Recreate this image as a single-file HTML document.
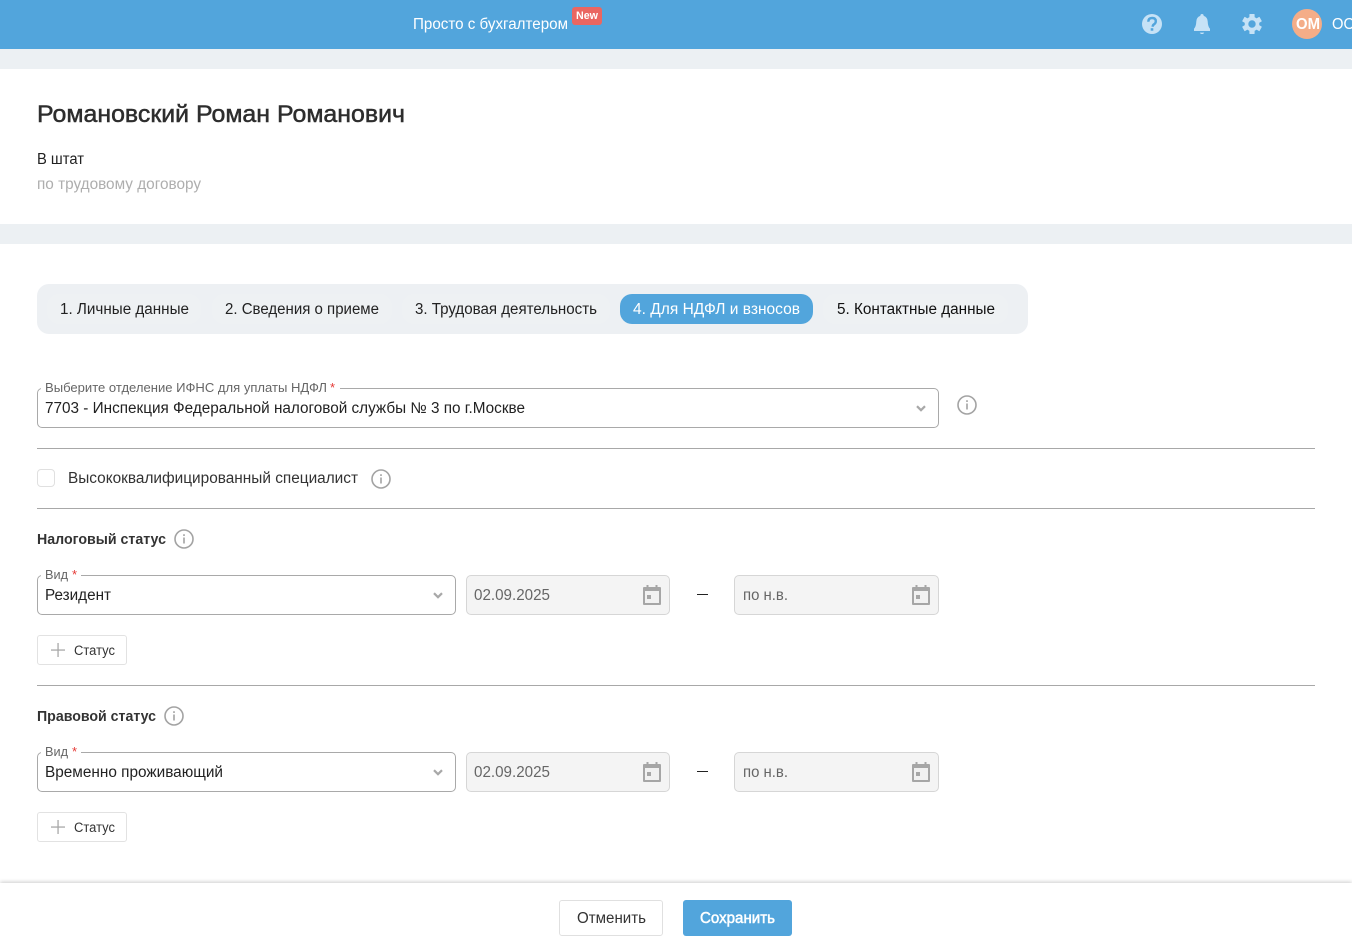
<!DOCTYPE html>
<html lang="ru">
<head>
<meta charset="utf-8">
<title>Романовский Роман Романович</title>
<style>
html,body{margin:0;padding:0;background:#fff}
body{width:1352px;height:945px;position:relative;overflow:hidden;font-family:"Liberation Sans",sans-serif}
.a{position:absolute;box-sizing:border-box}
.sel{border:1px solid #a9a9a9;border-radius:5px;background:#fff}
.date{border:1px solid #d6d6d6;border-radius:5px;background:#f4f4f4}
.hr{left:37px;width:1278px;height:1px;background:#a8a8a8}
.btn{border:1px solid #e2e2e2;border-radius:3px;background:#fff}
svg{position:absolute;left:0;top:0}
text{font-family:"Liberation Sans",sans-serif;font-size:15.5px;fill:#222}
.m{stroke-width:.5px;paint-order:stroke}
</style>
</head>
<body>
<div class="a" style="left:0;top:0;width:1352px;height:49px;background:#52a5dc"></div>
<div class="a" style="left:0;top:49px;width:1352px;height:20px;background:#ecf0f3"></div>
<div class="a" style="left:0;top:224px;width:1352px;height:20px;background:#ecf0f3"></div>
<div class="a" style="left:572px;top:7px;width:30px;height:18px;border-radius:3px;background:#ea6661"></div>
<div class="a" style="left:1292px;top:9px;width:30px;height:30px;border-radius:50%;background:#f4ad88"></div>

<div class="a" style="left:37px;top:284px;width:991px;height:50px;border-radius:12px;background:#edf0f3"></div>
<div class="a" style="left:47px;top:294px;width:154px;height:30px;border-radius:12px;background:#eef1f3"></div>
<div class="a" style="left:212px;top:294px;width:180px;height:30px;border-radius:12px;background:#eef1f3"></div>
<div class="a" style="left:402px;top:294px;width:208px;height:30px;border-radius:12px;background:#eef1f3"></div>
<div class="a" style="left:823px;top:294px;width:185px;height:30px;border-radius:12px;background:#eef1f3"></div>
<div class="a" style="left:620px;top:294px;width:193px;height:30px;border-radius:12px;background:#52a5dc"></div>

<div class="a sel" style="left:37px;top:388px;width:902px;height:40px"></div>
<div class="a" style="left:41px;top:384px;width:299px;height:8px;background:#fff"></div>
<div class="a hr" style="top:448px"></div>
<div class="a" style="left:37px;top:469px;width:18px;height:18px;border:1px solid #e0e0e0;border-radius:4px;background:#fff"></div>
<div class="a hr" style="top:508px"></div>

<div class="a sel" style="left:37px;top:575px;width:419px;height:40px"></div>
<div class="a" style="left:41px;top:571px;width:40px;height:8px;background:#fff"></div>
<div class="a date" style="left:466px;top:575px;width:204px;height:40px"></div>
<div class="a date" style="left:734px;top:575px;width:205px;height:40px"></div>
<div class="a" style="left:697px;top:594px;width:11px;height:1px;background:#222"></div>
<div class="a btn" style="left:37px;top:635px;width:90px;height:30px"></div>
<div class="a hr" style="top:685px"></div>

<div class="a sel" style="left:37px;top:752px;width:419px;height:40px"></div>
<div class="a" style="left:41px;top:748px;width:40px;height:8px;background:#fff"></div>
<div class="a date" style="left:466px;top:752px;width:204px;height:40px"></div>
<div class="a date" style="left:734px;top:752px;width:205px;height:40px"></div>
<div class="a" style="left:697px;top:771px;width:11px;height:1px;background:#222"></div>
<div class="a btn" style="left:37px;top:812px;width:90px;height:30px"></div>

<div class="a" style="left:0;top:883px;width:1352px;height:62px;background:#fff;box-shadow:0 -1px 4px rgba(0,0,0,.2)"></div>
<div class="a" style="left:559px;top:900px;width:104px;height:36px;border:1px solid #e0e0e0;border-radius:3px;background:#fff"></div>
<div class="a" style="left:683px;top:900px;width:109px;height:36px;border-radius:3px;background:#52a5dc"></div>

<svg width="1352" height="945" viewBox="0 0 1352 945" xmlns="http://www.w3.org/2000/svg">
<defs>
<g id="info"><circle cx="0" cy="0" r="9" fill="none" stroke="#a3a3a3" stroke-width="1.6"/><rect x="-.8" y="-1.5" width="1.6" height="6" fill="#a3a3a3"/><rect x="-.8" y="-4.800" width="1.6" height="1.8" fill="#a3a3a3"/></g>
<path id="chev" d="M-4-1.800 0 2.200 4-1.800" fill="none" stroke="#a8a8a8" stroke-width="2.200"/>
<g id="cal"><rect x="-9" y="-8" width="18" height="18" rx="1" fill="#a6a6a6"/><rect x="-5.500" y="-10" width="2" height="3" fill="#a6a6a6"/><rect x="3.500" y="-10" width="2" height="3" fill="#a6a6a6"/><rect x="-7" y="-4" width="14" height="12" fill="#f1f1f1"/><rect x="-5" y="0" width="4" height="4" fill="#a6a6a6"/></g>
<g id="plus"><rect x="-7" y="-.6" width="14" height="1.300" fill="#a8a8a8"/><rect x="-.6" y="-7" width="1.300" height="14" fill="#a8a8a8"/></g>
<rect id="tooth" x="-2.600" y="-10" width="5.200" height="5" rx=".5" fill="#c6e2f6"/>
</defs>

<text x="413" y="29" textLength="155" lengthAdjust="spacingAndGlyphs" style="fill:#fff">Просто с бухгалтером</text>
<text x="576" y="19" textLength="22" lengthAdjust="spacingAndGlyphs" style="font-size:11px;fill:#fff;font-weight:bold">New</text>

<circle cx="1152" cy="24" r="10" fill="#c6e2f6"/>
<path d="M1148.300 21.800q0-3.800 3.800-3.800 3.700 0 3.700 3.300 0 1.900-1.800 3-1.300.8-1.300 2.400" fill="none" stroke="#52a5dc" stroke-width="2.400"/>
<rect x="1150.700" y="28.200" width="2.600" height="2.500" fill="#52a5dc"/>
<path d="M1202 14q1.700 0 1.700 1.900 3.700 1.200 4 5.600.2 5 2.300 7.300v2.200h-16v-2.200q2.100-2.300 2.300-7.300.3-4.400 4-5.600 0-1.900 1.700-1.900z" fill="#c6e2f6"/>
<path d="M1199.800 32.600h4.400q-.5 1.400-2.200 1.400t-2.200-1.400z" fill="#c6e2f6"/>
<g transform="translate(1252 24)">
<use href="#tooth"/><use href="#tooth" transform="rotate(60)"/><use href="#tooth" transform="rotate(120)"/><use href="#tooth" transform="rotate(180)"/><use href="#tooth" transform="rotate(240)"/><use href="#tooth" transform="rotate(300)"/>
<circle r="5.500" fill="none" stroke="#c6e2f6" stroke-width="3.600"/>
</g>
<text x="1296" y="29" textLength="24" lengthAdjust="spacingAndGlyphs" style="font-size:16px;fill:#fff;font-weight:bold">ОМ</text>
<text x="1332" y="29" textLength="23" lengthAdjust="spacingAndGlyphs" style="fill:#fff">ОО</text>

<text x="37" y="122" textLength="368" lengthAdjust="spacingAndGlyphs" class="m" style="font-size:24px;fill:#2d2d2d;stroke:#2d2d2d">Романовский Роман Романович</text>
<text x="37" y="164" textLength="47" lengthAdjust="spacingAndGlyphs">В штат</text>
<text x="37" y="189" textLength="164" lengthAdjust="spacingAndGlyphs" style="fill:#aeaeae">по трудовому договору</text>

<text x="60" y="314" textLength="129" lengthAdjust="spacingAndGlyphs">1. Личные данные</text>
<text x="225" y="314" textLength="154" lengthAdjust="spacingAndGlyphs">2. Сведения о приеме</text>
<text x="415" y="314" textLength="182" lengthAdjust="spacingAndGlyphs">3. Трудовая деятельность</text>
<text x="633" y="314" textLength="167" lengthAdjust="spacingAndGlyphs" style="fill:#fff">4. Для НДФЛ и взносов</text>
<text x="837" y="314" textLength="158" lengthAdjust="spacingAndGlyphs" style="fill:#111">5. Контактные данные</text>

<text x="45" y="392" textLength="282" lengthAdjust="spacingAndGlyphs" style="font-size:12.5px;fill:#666">Выберите отделение ИФНС для уплаты НДФЛ</text>
<text x="330" y="392" style="font-size:13px;fill:#e53935">*</text>
<text x="45" y="413" textLength="480" lengthAdjust="spacingAndGlyphs">7703 - Инспекция Федеральной налоговой службы № 3 по г.Москве</text>
<use href="#chev" x="921" y="408"/>
<use href="#info" x="967" y="405"/>

<text x="68" y="483" textLength="290" lengthAdjust="spacingAndGlyphs" style="fill:#333">Высококвалифицированный специалист</text>
<use href="#info" x="381" y="479"/>

<text x="37" y="544" textLength="129" lengthAdjust="spacingAndGlyphs" style="font-weight:bold;font-size:15px;fill:#333">Налоговый статус</text>
<use href="#info" x="184" y="539"/>

<text x="45" y="579" textLength="23" lengthAdjust="spacingAndGlyphs" style="font-size:12.5px;fill:#666">Вид</text>
<text x="72" y="579" style="font-size:13px;fill:#e53935">*</text>
<text x="45" y="600" textLength="66" lengthAdjust="spacingAndGlyphs">Резидент</text>
<use href="#chev" x="438" y="595"/>
<text x="474" y="600" textLength="76" lengthAdjust="spacingAndGlyphs" style="fill:#666">02.09.2025</text>
<use href="#cal" x="652" y="595"/>
<text x="743" y="600" textLength="45" lengthAdjust="spacingAndGlyphs" style="fill:#666">по н.в.</text>
<use href="#cal" x="921" y="595"/>
<use href="#plus" x="58" y="650"/>
<text x="74" y="655" textLength="41" lengthAdjust="spacingAndGlyphs" style="font-size:13.5px;fill:#333">Статус</text>

<text x="37" y="721" textLength="119" lengthAdjust="spacingAndGlyphs" style="font-weight:bold;font-size:15px;fill:#333">Правовой статус</text>
<use href="#info" x="174" y="716"/>

<text x="45" y="756" textLength="23" lengthAdjust="spacingAndGlyphs" style="font-size:12.5px;fill:#666">Вид</text>
<text x="72" y="756" style="font-size:13px;fill:#e53935">*</text>
<text x="45" y="777" textLength="178" lengthAdjust="spacingAndGlyphs">Временно проживающий</text>
<use href="#chev" x="438" y="772"/>
<text x="474" y="777" textLength="76" lengthAdjust="spacingAndGlyphs" style="fill:#666">02.09.2025</text>
<use href="#cal" x="652" y="772"/>
<text x="743" y="777" textLength="45" lengthAdjust="spacingAndGlyphs" style="fill:#666">по н.в.</text>
<use href="#cal" x="921" y="772"/>
<use href="#plus" x="58" y="827"/>
<text x="74" y="832" textLength="41" lengthAdjust="spacingAndGlyphs" style="font-size:13.5px;fill:#333">Статус</text>

<text x="577" y="923" textLength="69" lengthAdjust="spacingAndGlyphs" style="fill:#333">Отменить</text>
<text x="700" y="923" textLength="75" lengthAdjust="spacingAndGlyphs" class="m" style="fill:#fff;stroke:#fff">Сохранить</text>
</svg>
</body>
</html>
